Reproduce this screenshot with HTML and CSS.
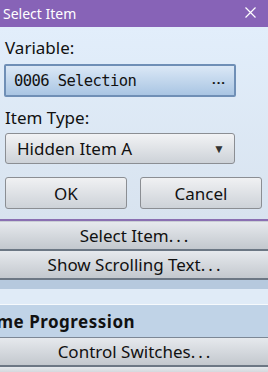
FILE: index.html
```html
<!DOCTYPE html>
<html lang="en">
<head>
    <meta charset="UTF-8">
    <title>Select Item</title>
    <link rel="stylesheet" href="styles.css">
</head>
<body>
    <div class="dialog">
        <div class="titlebar">
            <span class="title">Select Item</span>
            <svg class="close" width="11" height="11" viewBox="0 0 11 11">
                <path d="M0.5 0.5 L10.5 10.5 M10.5 0.5 L0.5 10.5" stroke="#fff" stroke-width="1.2" fill="none"/>
            </svg>
        </div>
        <div class="dialog-body">
            <div class="label">Variable:</div>
            <div class="var-field">
                <span class="var-text">0006 Selection</span>
                <span class="dots">...</span>
            </div>
            <div class="label label-type">Item Type:</div>
            <div class="select">
                <span>Hidden Item A</span>
                <span class="arrow">▼</span>
            </div>
            <div class="buttons">
                <div class="btn">OK</div>
                <div class="btn">Cancel</div>
            </div>
        </div>
    </div>

    <div class="commands">
        <div class="cmd">Select Item<span class="ell">...</span></div>
        <div class="cmd">Show Scrolling Text<span class="ell">...</span></div>
        <div class="strip"></div>
        <div class="gap"></div>
        <div class="group">Game Progression</div>
        <div class="cmd">Control Switches<span class="ell">...</span></div>
        <div class="cmd cmd-cut"></div>
    </div>
</body>
</html>
```
FILE: styles.css
```css
body {
    margin: 0;
    width: 268px;
    height: 372px;
    overflow: hidden;
    background-color: #dfe9f5;
    font-family: "Noto Sans", "Open Sans", sans-serif;
    color: #111;
}
.dialog {
    border-bottom: 2px solid #8a70b2;
}
.titlebar {
    height: 27px;
    background-color: #8763b7;
    display: flex;
    align-items: center;
    justify-content: space-between;
    padding: 0 12px 0 3px;
}
.title {
    color: #fff;
    font-size: 14px;
}
.close {
    margin-top: -2px;
}
.dialog-body {
    background: linear-gradient(#e2eefb, #d8e3ef);
    padding: 10px 6px 10px 5px;
}
.label {
    font-size: 17px;
    line-height: 22px;
}
.label-type {
    margin-top: 10px;
}
.var-field {
    margin: 5px 26px 0 -1px;
    height: 29px;
    border: 2px solid #6f8fb6;
    border-radius: 2px;
    background: linear-gradient(#dbe8f6, #a9c5e3);
    display: flex;
    align-items: center;
    justify-content: space-between;
    padding: 0 8px 0 8px;
}
.var-text {
    font-family: "DejaVu Sans Mono", "Liberation Mono", monospace;
    font-size: 15.5px;
    letter-spacing: -0.6px;
}
.dots {
    font-weight: bold;
    font-size: 13px;
    letter-spacing: 1px;
    margin-top: -4px;
}
.select {
    margin: 4px 27px 0 0;
    height: 29px;
    border: 1px solid #8b8e93;
    border-radius: 3px;
    background: linear-gradient(#f2f3f5, #cdd2d8);
    display: flex;
    align-items: center;
    justify-content: space-between;
    padding: 0 9px 0 11px;
    font-size: 17px;
}
.arrow {
    font-size: 12px;
    color: #333;
}
.buttons {
    display: flex;
    gap: 13px;
    margin-top: 13px;
}
.btn {
    width: 120px;
    height: 30px;
    border: 1px solid #8b8e93;
    border-radius: 3px;
    background: linear-gradient(#f0f1f3, #cdd2d8);
    display: flex;
    align-items: center;
    justify-content: center;
    font-size: 17px;
}
.commands {
    padding-top: 1px;
    background-color: #c9ced5;
}
.cmd {
    height: 27px;
    border-bottom: 2px solid #6c7784;
    background: linear-gradient(#e6e9ed, #c3c8ce);
    display: flex;
    align-items: center;
    justify-content: center;
    font-size: 17px;
}
.ell {
    letter-spacing: 3px;
    margin-right: -3px;
}
.strip {
    height: 9px;
    background-color: #b6c9de;
}
.gap {
    height: 15px;
    background-color: #e0ebf7;
    border-bottom: 1px solid #f6f9fc;
}
.group {
    height: 32px;
    background-color: #c0d3e7;
    border-bottom: 1px solid #7c8795;
    font-weight: bold;
    font-size: 17px;
    letter-spacing: 0.5px;
    display: flex;
    align-items: center;
    margin-left: -27px;
}
.cmd-cut {
    height: 10px;
}
```
